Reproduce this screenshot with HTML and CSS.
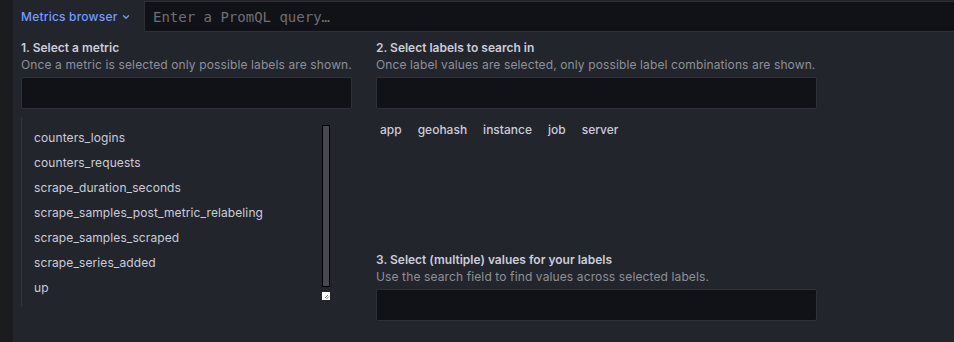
FILE: index.html
```html
<!DOCTYPE html>
<html lang="en">
<head>
  <meta charset="UTF-8">
  <title>Metrics browser</title>
  <link rel="stylesheet" href="styles.css">
</head>
<body>
  <div class="panel">
    <div class="query-row">
      <button class="browser-tab">
        Metrics browser
        <svg class="chevron" width="8" height="8" viewBox="0 0 8 8"><path d="M1.5 2.8 L4 5.3 L6.5 2.8" fill="none" stroke="#6e9fff" stroke-width="1.3" stroke-linecap="round" stroke-linejoin="round"/></svg>
      </button>
      <div class="query-input">Enter a PromQL query…</div>
    </div>

    <div class="browser">
      <div class="col-left">
        <div class="step-title">1. Select a metric</div>
        <div class="step-desc">Once a metric is selected only possible labels are shown.</div>
        <div class="search-box"></div>

        <div class="metric-list">
          <ul class="metrics">
            <li>counters_logins</li>
            <li>counters_requests</li>
            <li>scrape_duration_seconds</li>
            <li>scrape_samples_post_metric_relabeling</li>
            <li>scrape_samples_scraped</li>
            <li>scrape_series_added</li>
            <li>up</li>
          </ul>
          <div class="scroll-col">
            <div class="scroll-thumb"></div>
            <div class="resize-handle">
              <svg width="6" height="6" viewBox="0 0 6 6"><path d="M4 1 L1 4 M5 2.5 L2.5 5" stroke="#555" stroke-width="0.8"/></svg>
            </div>
          </div>
        </div>
      </div>

      <div class="col-right">
        <div class="step-title">2. Select labels to search in</div>
        <div class="step-desc">Once label values are selected, only possible label combinations are shown.</div>
        <div class="search-box"></div>
        <div class="label-list">
          <span class="label-tag">app</span>
          <span class="label-tag">geohash</span>
          <span class="label-tag">instance</span>
          <span class="label-tag">job</span>
          <span class="label-tag">server</span>
        </div>

        <div class="values-section">
          <div class="step-title">3. Select (multiple) values for your labels</div>
          <div class="step-desc">Use the search field to find values across selected labels.</div>
          <div class="search-box"></div>
        </div>
      </div>
    </div>
  </div>
</body>
</html>
```

FILE: styles.css
```css
body {
  margin: 0;
  padding: 0 0 0 13px;
  background: #1a1c20;
  font-family: 'Inter', 'Noto Sans', sans-serif;
  overflow: hidden;
}

.panel {
  background: #22252b;
  height: 342px;
}

/* top row: tab + query field */
.query-row {
  display: flex;
  height: 33px;
}

.browser-tab {
  width: 131px;
  display: flex;
  align-items: center;
  gap: 5px;
  padding: 0 0 0 8px;
  background: #22252b;
  border: none;
  color: #6e9fff;
  font-family: 'Inter', sans-serif;
  font-size: 12px;
  font-weight: 500;
  letter-spacing: 0.2px;
}

.chevron {
  margin-top: 1px;
}

.query-input {
  flex: 1;
  margin-top: 1px;
  height: 31px;
  box-sizing: border-box;
  background: #111217;
  border-top: 1px solid #2e3035;
  border-left: 1px solid #2e3035;
  border-bottom: 1px solid #2e3035;
  padding: 0 8px;
  display: flex;
  align-items: center;
  font-family: 'DejaVu Sans Mono', monospace;
  font-size: 14px;
  color: #6d6f75;
}

/* browser columns */
.browser {
  display: flex;
  gap: 24px;
  padding: 7px 0 0 8px;
}

.col-left {
  width: 331px;
}

.col-right {
  width: 441px;
}

.step-title {
  font-size: 12px;
  font-weight: 600;
  line-height: 16px;
  color: #ccccdc;
}

.step-desc {
  font-size: 12px;
  line-height: 17px;
  letter-spacing: 0.12px;
  white-space: nowrap;
  color: #8f909a;
}

.search-box {
  margin-top: 4px;
  height: 32px;
  box-sizing: border-box;
  background: #111217;
  border: 1px solid #2f3136;
  border-radius: 2px;
}

.metric-list {
  margin-top: 8px;
  height: 190px;
  border-left: 1px solid #34363c;
  display: flex;
}

.metrics {
  flex: 1;
  list-style: none;
  margin: 0;
  padding: 8px 0 0 12px;
}

.metrics li {
  height: 25px;
  line-height: 25px;
  font-size: 12px;
  letter-spacing: 0.1px;
  color: #ccccdc;
}

.scroll-col {
  width: 8px;
  margin-right: 22px;
  padding-top: 8px;
  display: flex;
  flex-direction: column;
  gap: 5px;
}

.scroll-thumb {
  height: 162px;
  box-sizing: border-box;
  background: #484850;
  border: 1px solid #000;
}

.resize-handle {
  height: 8px;
  background: #fff;
  display: flex;
  align-items: flex-end;
  justify-content: flex-end;
}

.resize-handle svg {
  display: block;
}

.label-list {
  display: flex;
  gap: 8px;
  margin-top: 11px;
  height: 20px;
}

.label-tag {
  padding: 0 4px;
  line-height: 20px;
  font-size: 12px;
  font-weight: 500;
  color: #ccccdc;
}

.values-section {
  margin-top: 112px;
}
```
